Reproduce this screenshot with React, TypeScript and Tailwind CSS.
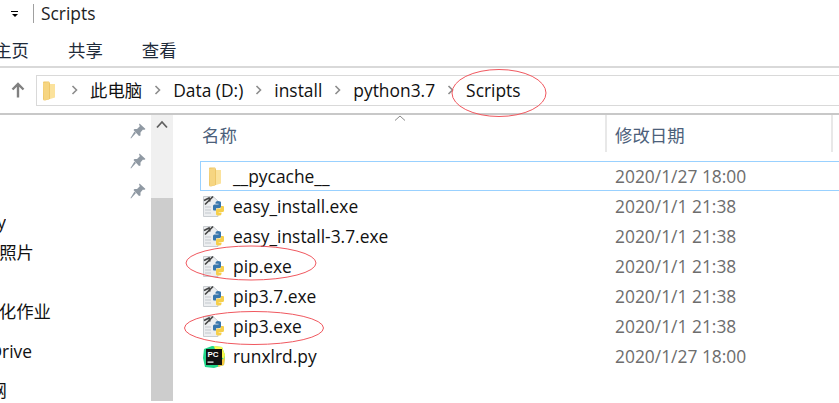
const font = "font-['Open_Sans','Noto_Sans_CJK_SC',sans-serif]";

function FolderIcon({ className = "" }: { className?: string }) {
  return (
    <svg width="16" height="20" viewBox="0 0 16 20" className={className}>
      <path d="M1 1.5 Q1 0.5 2 0.5 L7 0.5 L8 2 L8 18 L3 19.5 Q1 19.5 1 18 Z" fill="#eec76a" />
      <path d="M8 3 L13 3 L13 16.5 L8 18 Z" fill="#fbe29c" />
      <path d="M1 2 L7 1 L7 18.5 L2 19 Z" fill="#f6d581" />
    </svg>
  );
}

const snake = "M10 14.5 V11 Q10 9.5 11.5 9.5 H15.5 V8.8 H12.5 V7.5 Q12.5 6 15 6 Q18 6 18 7.5 V11.5 Q18 13 16.5 13 H14 Q13 13 13 14 V15.5 H11 Q10 15.5 10 14.5 Z";

function PythonIcon() {
  return (
    <svg width="24" height="24" viewBox="0 0 24 24" className="ml-[3px]">
      <path d="M0.5 1.5 H10 L15 6 V21.5 H0.5 Z" fill="#eceef0" stroke="#c9cdd1" strokeWidth="1" />
      <path d="M2 12 H8 M2 15 H8 M2 18 H8" stroke="#c4c9ce" strokeWidth="1" />
      <path d="M2 9.5 L10 1.5 M1 5.5 L6 3 L7 6.5" stroke="#454545" strokeWidth="1.7" fill="none" />
      <path d={snake} fill="#f6cf4c" transform="rotate(180 15.5 13.2)" />
      <path d={snake} fill="#3877ad" />
    </svg>
  );
}

function PyCharmIcon() {
  return (
    <svg width="24" height="24" viewBox="0 0 24 24" className="ml-[2px]">
      <path d="M2 4 L10 1 L20 2 L23 10 L22 20 L12 23 L3 22 L1 13 Z" fill="#21d789" />
      <path d="M12 1 L20 2 L23 10 L22 14 L14 8 Z" fill="#fcf84a" />
      <path d="M16 22 L22 20 L23 13 L17 16 Z" fill="#f9c83f" />
      <rect x="4" y="4" width="16" height="16" fill="#111" />
      <text x="5.5" y="12" fontSize="8" fontWeight="700" fill="#fff" fontFamily="Liberation Sans">PC</text>
      <rect x="5.5" y="16.5" width="6" height="1.2" fill="#fff" />
    </svg>
  );
}

function Pin() {
  return (
    <svg width="16" height="16" viewBox="0 0 16 16" fill="#8f99a3">
      <path d="M9.5 0.5 L15.5 6 L14 7 L13 6.5 L10.5 9.5 L10.5 12.5 L9 13 L3.5 7 L4.5 6 L7 6 L10 3 L9 2 Z" />
      <path d="M6 10 L1 15.5 L0.5 15 L4.5 8.5 Z" />
    </svg>
  );
}

function Chevron() {
  return (
    <svg width="8" height="10" viewBox="0 0 8 10" fill="none" stroke="#8c8c8c" strokeWidth="1.6">
      <path d="M1.5 1 L5.5 5 L1.5 9" />
    </svg>
  );
}

const files = [
  { name: "__pycache__", date: "2020/1/27 18:00", kind: "folder", selected: true },
  { name: "easy_install.exe", date: "2020/1/1 21:38", kind: "py" },
  { name: "easy_install-3.7.exe", date: "2020/1/1 21:38", kind: "py" },
  { name: "pip.exe", date: "2020/1/1 21:38", kind: "py" },
  { name: "pip3.7.exe", date: "2020/1/1 21:38", kind: "py" },
  { name: "pip3.exe", date: "2020/1/1 21:38", kind: "py" },
  { name: "runxlrd.py", date: "2020/1/27 18:00", kind: "pc" },
];

const crumbs = ["此电脑", "Data (D:)", "install", "python3.7", "Scripts"];

const nav = [
  { t: "y", w: "w-[6px]", mt: "mt-[11px]" },
  { t: "本地照片", w: "w-[34px]", mt: "mt-[6px]" },
  { t: "文档化作业", w: "w-[51px]", mt: "mt-[35px]" },
  { t: "OneDrive", w: "w-[32px]", mt: "mt-[16px]" },
  { t: "网", w: "w-[7px]", mt: "mt-[15px]" },
];

export default function App() {
  return (
    <div className={`relative w-[839px] h-[403px] overflow-hidden bg-white text-[17.4px] text-[#111] ${font}`}>
      {/* Title bar */}
      <div className="h-[26px] flex items-center pl-[10px]">
        <div className="flex flex-col items-center gap-[2px] w-[9px] mt-[1px]">
          <div className="w-[7px] h-[1px] bg-black" />
          <div className="w-0 h-0 border-x-[3px] border-x-transparent border-t-[3px] border-t-black" />
        </div>
        <div className="w-px h-[19px] bg-[#a0a0a0] ml-[14px]" />
        <span className="ml-[7px] leading-[26px] text-[#222]">Scripts</span>
      </div>

      {/* Ribbon tabs */}
      <div className="h-[42px] border-b-2 border-[#d9d9d9] flex items-center relative text-[#1f2b3a]">
        <div className="flex items-center pt-[9px]">
          <span className="w-[29px] overflow-hidden flex justify-end whitespace-nowrap">主页</span>
          <span className="ml-[39px]">共享</span>
          <span className="ml-[39px]">查看</span>
        </div>
      </div>

      {/* Address row */}
      <div className="h-[47px] border-b-2 border-[#c8c8c8] flex items-start">
        <div className="w-[36px] h-[37px] pt-[14px] pl-[11px] text-[#7a7a7a]">
          <svg width="14" height="16" viewBox="0 0 14 16" fill="none" stroke="#808080" strokeWidth="2.4">
            <path d="M7 15.5 V2 M1.5 7.5 L7 2 L12.5 7.5" />
          </svg>
        </div>
        <div className="flex-1 mt-[7px] h-[31px] border border-r-0 border-[#d9d9d9] flex items-center pl-[5px]">
          <FolderIcon />
          <div className="flex items-center ml-[1px]">
            {crumbs.map((c) => (
              <div key={c} className="flex items-center">
                <span className="mx-[11.5px] flex">
                  <Chevron />
                </span>
                <span className="whitespace-nowrap">{c}</span>
              </div>
            ))}
          </div>
        </div>
      </div>

      {/* Body */}
      <div className="flex h-[286px]">
        {/* Nav pane */}
        <div className="w-[151px] relative overflow-hidden">
          <div className="flex flex-col items-end pr-[5px] pt-[8px] gap-[14px]">
            <Pin />
            <Pin />
            <Pin />
          </div>
          <div className="flex flex-col">
            {nav.map((n) => (
              <div key={n.t} className={`${n.w} ${n.mt} h-[24px] leading-[24px] flex justify-end overflow-hidden whitespace-nowrap`}>
                {n.t}
              </div>
            ))}
          </div>
        </div>
        {/* Scrollbar */}
        <div className="w-[22px] flex flex-col">
          <div className="h-[83px] bg-[#f0f0f0] flex justify-center pt-[5px]">
            <svg width="12" height="9" viewBox="0 0 12 9" fill="none" stroke="#606060" strokeWidth="1.8">
              <path d="M1 7.5 L6 2 L11 7.5" />
            </svg>
          </div>
          <div className="flex-1 bg-[#cdcdcd]" />
        </div>
        {/* File list */}
        <div className="flex-1 relative">
          <div className="h-[46px] flex items-start text-[#4c607a]">
            <div className="w-[434px] h-[37px] pl-[29px] pt-[7px] leading-[26px] relative border-r-2 border-[#e8e8e8]">
              <span>名称</span>
              <svg className="absolute left-[221px] top-0" width="12" height="6" viewBox="0 0 12 6" fill="none" stroke="#8a8a8a">
                <path d="M1 5.5 L6 1 L11 5.5" />
              </svg>
            </div>
            <div className="w-[226px] h-[37px] pl-[8px] pt-[7px] leading-[26px] border-r-2 border-[#e8e8e8]">修改日期</div>
          </div>
          <div className="pl-[27px]">
            {files.map((f) => (
              <div
                key={f.name}
                className={`h-[30px] flex items-center pt-[1px] ${
                  f.selected ? "border border-r-0 border-[#99d1ff]" : ""
                }`}
              >
                <div className={`${f.selected ? "w-[32px]" : "w-[33px]"} flex justify-start shrink-0`}>
                  {f.kind === "folder" && <FolderIcon className="ml-[7px]" />}
                  {f.kind === "py" && <PythonIcon />}
                  {f.kind === "pc" && <PyCharmIcon />}
                </div>
                <span className="w-[382px] whitespace-nowrap text-[#111]">{f.name}</span>
                <span className="whitespace-nowrap text-[#6d6d6d]">{f.date}</span>
              </div>
            ))}
          </div>
        </div>
      </div>

      {/* Red hand-drawn annotations */}
      <svg className="absolute left-0 top-0 pointer-events-none" width="839" height="403" fill="none" stroke="#f0585f" strokeWidth="1">
        <ellipse cx="499" cy="93" rx="47" ry="23.5" />
        <ellipse cx="251" cy="263" rx="65" ry="17" />
        <ellipse cx="254" cy="328" rx="69.5" ry="16.5" />
      </svg>
    </div>
  );
}
